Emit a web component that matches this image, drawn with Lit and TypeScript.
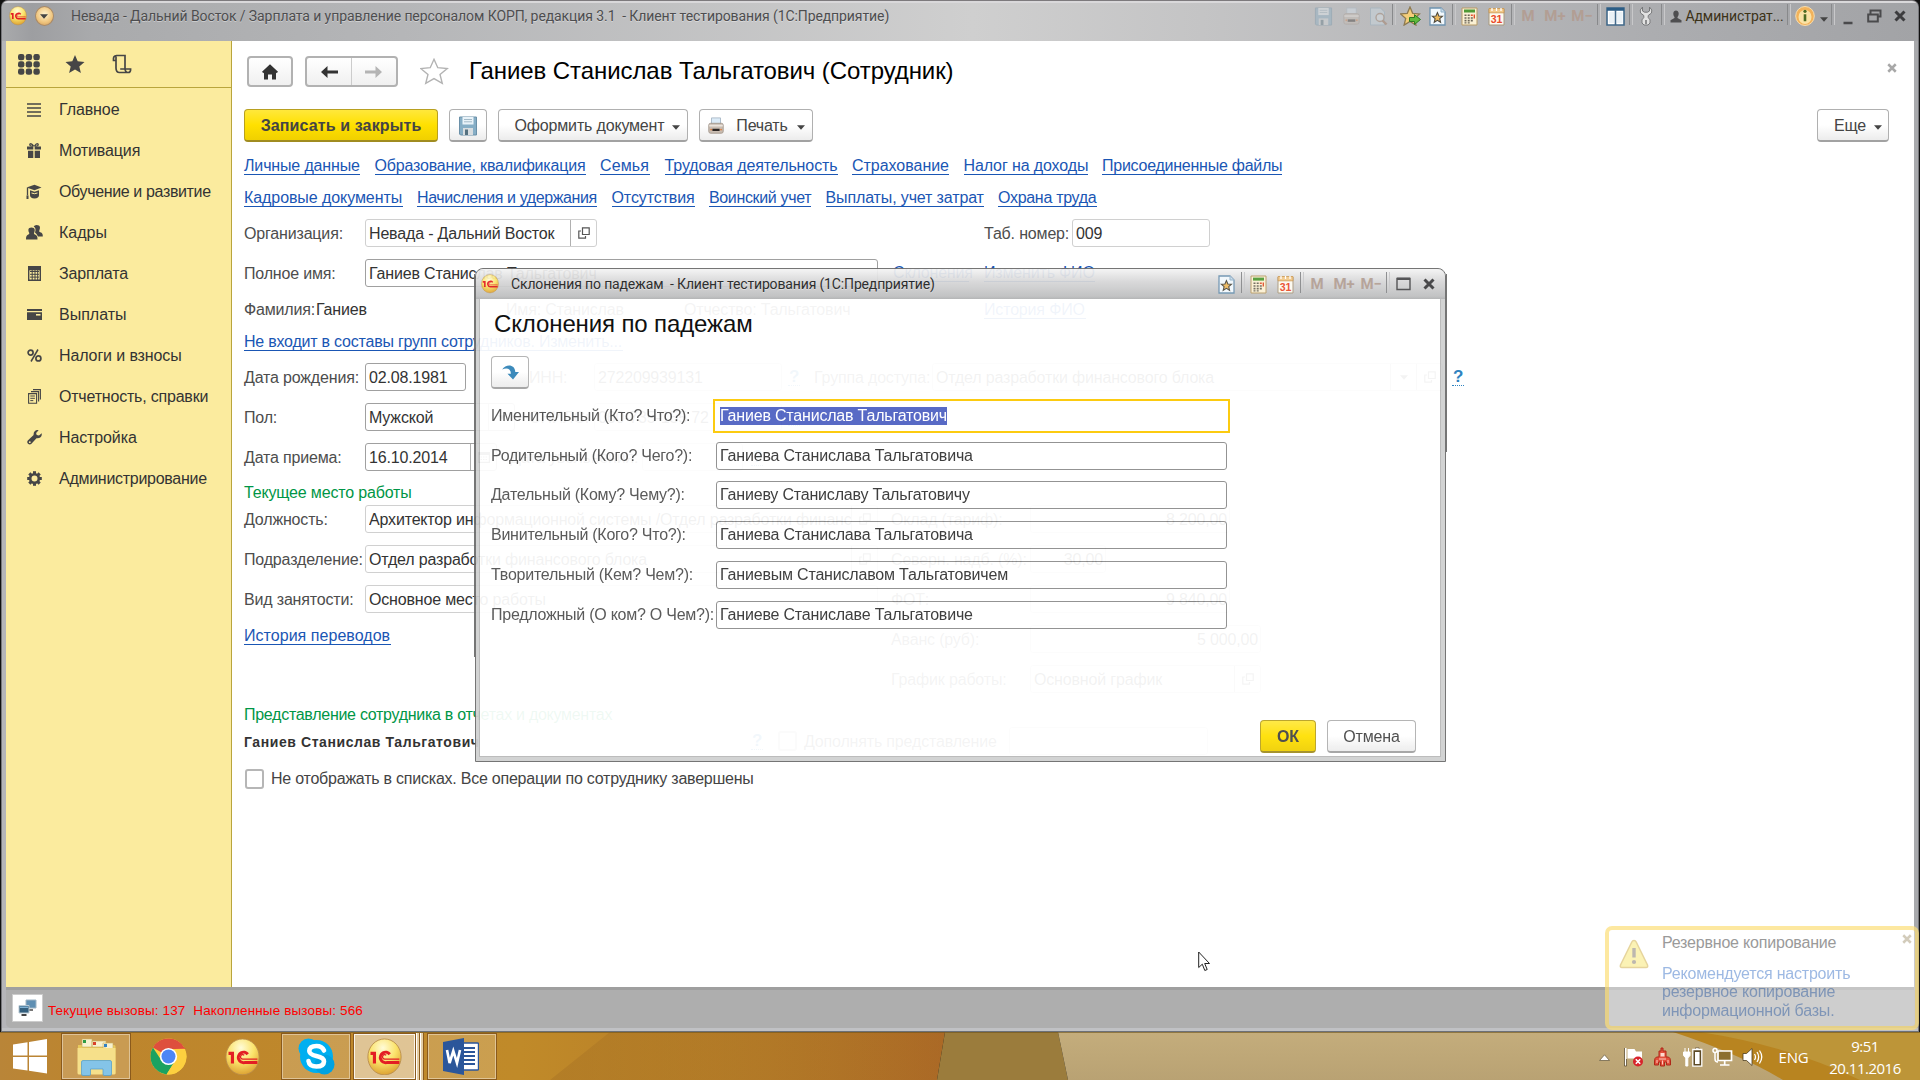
import { LitElement, html, svg, css, nothing, TemplateResult } from "lit";
import { customElement, state } from "lit/decorators.js";
import { classMap } from "lit/directives/class-map.js";
import { styleMap } from "lit/directives/style-map.js";

const icon = (w: number, h: number, body: unknown, box = `0 0 ${w} ${h}`) =>
  html`<svg class="ic" width=${w} height=${h} viewBox=${box}>${body}</svg>`;

const star = "M10 1l2.7 6.3 6.8.6-5.2 4.5 1.6 6.7L10 15.5l-5.9 3.6 1.6-6.7L.5 7.9l6.8-.6z";

const icons = {
  logo: (s: number) => icon(s, s * 1.08, svg`
    <defs><radialGradient id="lg" cx=".45" cy=".25" r=".8"><stop offset="0" stop-color="#fffbd8"/><stop offset=".5" stop-color="#fbe36a"/><stop offset="1" stop-color="#d99a2c"/></radialGradient></defs>
    <ellipse cx="20" cy="21.5" rx="19" ry="20.5" fill="url(#lg)" stroke="#b98d4a" stroke-width="1"/>
    <path d="M4 17.5h4.5V29" fill="none" stroke="#e31e24" stroke-width="3.6"/>
    <path d="M26 18.5a6 6 0 1 0-3.5 9.5H37" fill="none" stroke="#e31e24" stroke-width="3.4"/>
    <path d="M22 19.5a2.6 2.6 0 1 0-1 4.5H37" fill="none" stroke="#e31e24" stroke-width="1.5"/>`, "0 0 40 43"),
  floppy: (s: number) => icon(s, s, svg`<path d="M1.5 1h17v18h-16l-1-1z" fill="#86aec6" stroke="#6b90a8"/><path d="M4.5 1h11v7.500h-11z" fill="#e9f3f9"/><path d="M6 3.5h8M6 5.8h8" stroke="#a3bac8"/><path d="M5 12h10v7H5z" fill="#d8dde0"/><path d="M7 13.5h3V19H7z" fill="#54707f"/>`, "0 0 20 20"),
  printer: (s: number) => icon(s, s, svg`<path d="M5 1h10v8H5z" fill="#dcebf7" stroke="#a8b8c6"/><path d="M2 9q0-2 2-2h12q2 0 2 2v7q0 2-2 2H4q-2 0-2-2z" fill="#c9bdb2" stroke="#a3968b"/><path d="M2.5 9.5h15" stroke="#ece4dc" stroke-width="2"/><path d="M6 13h8v2.6H6z" fill="#2c2522"/><circle cx="4.6" cy="14" r="1" fill="#e07c3c"/><circle cx="15.6" cy="14" r="1" fill="#e07c3c"/>`, "0 0 20 20"),
  preview: icon(19, 19, svg`<path d="M1.5 1h10l4 4v13h-14z" fill="#cfe0ec" stroke="#8fb0c4"/><circle cx="11" cy="10.5" r="4" fill="#e4f1f8" stroke="#9c7c66" stroke-width="1.4"/><path d="M13.5 13.5l4 4" stroke="#9c6c4c" stroke-width="2.4"/>`),
  starPlus: icon(21, 20, svg`<path d=${star} fill="#f4ce7a" stroke="#8d7a52" stroke-width="1.3"/><path d="M9.5 11.5h5V8.7l6 4.8-6 5v-3h-5z" fill="#5fba3c" stroke="#2f7a22"/>`, "0 0 21 20"),
  starDoc: icon(17, 19, svg`<path d="M1 1h11l4 4v13H1z" fill="#f2f8fc" stroke="#6e93b0" stroke-width="1.3"/><path d="M12 1v4h4" fill="#c9dcea" stroke="#8fb0c8"/><path d=${star} transform="translate(3 5) scale(.54)" fill="#eeb95c" stroke="#4e4a40" stroke-width="2"/>`),
  calc: icon(17, 19, svg`<path d="M1 1h15v17H1z" fill="#fbf1d4" stroke="#b79a66"/><path d="M3 2.6h11v3H3z" fill="#4f9a35"/><g fill="#6c6658"><path d="M3.5 7.5h2v1.6h-2zM6.7 7.5h2v1.6h-2zM3.5 10.2h2v1.6h-2zM6.7 10.2h2v1.6h-2zM9.8 10.2h2v1.6h-2zM3.5 12.8h2v1.6h-2zM6.7 12.8h2v1.6h-2zM9.8 12.8h2v1.6h-2zM3.5 15.2h2v1.3h-2zM6.7 15.2h2v1.3h-2z"/></g><path d="M9.8 7.5h2v1.6h-2zM12.6 7.5h1.4v4h-1.4z" fill="#e0502c"/>`),
  calendar: icon(17, 19, svg`<path d="M1 2h15v16H1z" fill="#fdfaf0" stroke="#a9987c"/><path d="M1 1.5h15v4.3H1z" fill="#f2c98a" stroke="#c9954f" stroke-width=".8"/><path d="M4 1v3M8.5 1v3M13 1v3" stroke="#fff" stroke-width="1.3"/><text x="8.5" y="15.8" text-anchor="middle" font-size="10.5" font-weight="700" font-family="Liberation Sans" letter-spacing="0" fill="#ea4a2a">31</text>`),
  columns: icon(19, 19, svg`<path d="M1 1h17v17H1z" fill="#fff" stroke="#42698a" stroke-width="1.6"/><path d="M1 2.2h17" stroke="#2b5d86" stroke-width="3"/><path d="M9.5 3v15" stroke="#42698a" stroke-width="1.6"/><path d="M3 5h5v11H3zM11 5h5.5v11H11z" fill="#eaf1f6"/>`),
  wrench: icon(14, 20, svg`<path d="M3.500 1Q0 4 1.500 7L4.800 9.500V11.500Q2 13.500 3 17l2 2h4l2-2q1-3.500-1.800-5.500V9.500L12.500 7Q14 4 10.500 1V5L8.500 6.200h-3L3.500 5z" fill="#e2e2e2" stroke="#77787a"/><path d="M7 14v4" stroke="#77787a" stroke-width="1.600"/>`),
  user: icon(12, 13, svg`<path d="M3.300 3.500C3.300-.5 8.700-.5 8.700 3.500c0 2-.7 3-1.200 3.600v1l4 2.200v2.200H.5v-2.200l4-2.200v-1C4 6.500 3.300 5.500 3.300 3.500z" fill="#4e4e50"/>`),
  info: icon(20, 20, svg`<ellipse cx="10" cy="10" rx="9.300" ry="9.500" fill="#f2b25a" stroke="#f6dcae"/><ellipse cx="10" cy="11" rx="6.500" ry="7" fill="#fbe3a6"/><path d="M10 8.200v7" stroke="#4e6b24" stroke-width="2.600"/><circle cx="10" cy="5.300" r="1.600" fill="#4e6b24"/>`),
  min: icon(12, 12, svg`<path d="M1.500 9h9" stroke="#4a4a4c" stroke-width="2.600"/>`),
  restore: icon(15, 14, svg`<path d="M3.500 5V1.500h10v6H11" fill="none" stroke="#4a4a4c" stroke-width="2"/><path d="M1.200 5.500h9.600v7H1.200z" fill="none" stroke="#4a4a4c" stroke-width="2"/>`),
  max: icon(15, 14, svg`<path d="M1 1.500h13v11H1z" fill="none" stroke="#4a4a4c" stroke-width="1.400"/><path d="M1 1.800h13" stroke="#4a4a4c" stroke-width="2.400"/>`),
  close: (s: number, c: string) => icon(s, s, svg`<path d="M1.500 1.500l9 9M10.500 1.500l-9 9" stroke=${c} stroke-width="3"/>`, "0 0 12 12"),
  caret: icon(8, 5, svg`<path d="M0 .3h8L4 4.700z" fill="#444"/>`),
  home: icon(20, 18, svg`<path d="M10 1.200l8 7.500-1.400 1.500L16 9.600V16.500h-4v-5H8v5H4V9.600l-.6.6L2 8.700z" fill="#333"/>`),
  back: icon(20, 14, svg`<path d="M8.500 1L2 7l6.500 6v-4.600H19V5.600H8.500z" fill="#333"/>`),
  fwd: icon(20, 14, svg`<path d="M11.500 1L18 7l-6.500 6v-4.600H1V5.600h10.500z" fill="#b4b4b4"/>`),
  fav: icon(29, 28, svg`<path d=${star} transform="scale(1.400 1.330)" fill="#fff" stroke="#b3b3b3" stroke-width="1"/>`),
  open: icon(12, 12, svg`<path d="M4.500.8h6.700v6.700H4.500z" fill="none" stroke="#555" stroke-width="1.200"/><path d="M3 4H.8v7.200h6.700V9" fill="none" stroke="#555" stroke-width="1.200"/>`),
  date: icon(12, 11, svg`<path d="M.6.600h10.800v9.800H.6z" fill="none" stroke="#555" stroke-width="1.200"/><path d="M1 2h10" stroke="#555" stroke-width="2"/><path d="M2.500 5h7M2.500 7.500h7" stroke="#555" stroke-width="1.200" stroke-dasharray="1.500 1"/>`),
  turn: icon(19, 17, svg`<path d="M1.200 5.500C5-.5 14 0 14.300 8h3.700l-6 7.500L6.500 9.800h3.400C10 5 6 3 1.200 5.500z" fill="#2f83b7"/>`),
  nets: icon(19, 18, svg`<path d="M8 1h10v8H8z" fill="#5f8fb3" stroke="#9fb4c4"/><path d="M10 11h5" stroke="#555" stroke-width="1.600"/><path d="M1 6.500h10V14H1z" fill="#34607f" stroke="#b9c9d4"/><path d="M2 7.500h8V9H2z" fill="#7fb1d4"/><path d="M3.500 16h5" stroke="#444" stroke-width="2"/>`),
  warn: icon(30, 30, svg`<path d="M15 1.500q1.500 0 2.200 1.500L28.500 26q.8 2.500-1.500 2.500H3Q.7 28.500 1.500 26L12.800 3q.7-1.500 2.200-1.500z" fill="#f8e45c" stroke="#c9a227" stroke-width="1.500"/><path d="M15 9v9.500" stroke="#6e6250" stroke-width="3.400"/><circle cx="15" cy="23" r="2.100" fill="#6e6250"/>`),
};

const side: Record<string, TemplateResult> = {
  grid: icon(22, 21, svg`${[0, 1, 2].map((r) => [0, 1, 2].map((c) => svg`<rect x=${c * 7.700} y=${r * 7.300} width="6.400" height="6.200" rx="2.300" fill="#464646"/>`))}`),
  star: icon(21, 20, svg`<path d=${star} fill="#464646"/>`),
  scroll: icon(20, 20, svg`<path d="M4 6.500H1.500Q1 1.500 4.500 1.500H13v12.800q0 4.200 3 4.200 2.800 0 2.600-3.500H8.200M4 2.500V14q0 4.500 3.500 4.500h9" fill="none" stroke="#464646" stroke-width="1.700"/>`),
  list: icon(14, 14, svg`<path d="M0 1h14M0 5h14M0 9h14M0 13h14" stroke="#464646" stroke-width="1.700"/>`),
  gift: icon(14, 15, svg`<path d="M0 3.500h6.300v3H0zM7.700 3.500H14v3H7.700zM1 7.800h5.300V15H1zM7.700 7.800H13V15H7.700z" fill="#464646"/><path d="M6.500 3Q2 3.500 3 1q1.500-1 3.500 2M7.500 3Q12 3.500 11 1 9.500 0 7.500 3" fill="none" stroke="#464646" stroke-width="1.300"/>`),
  cap: icon(16, 16, svg`<path d="M.5 3.500L8.500.8l7 2.700-7 2.700z" fill="#464646"/><path d="M4 6.200l4.500 1.600L13 6.200v5q0 3-4.500 3.300Q4 14.200 4 11.200z" fill="#464646"/><path d="M1.500 4v7.500" stroke="#464646" stroke-width="1.300"/><path d="M.5 11.500h2V15h-2z" fill="#464646"/><path d="M5.500 9q3 1.400 6 0" stroke="#fbeb9e" fill="none"/>`),
  people: icon(17, 15, svg`<path d="M10.500 0c4 0 4 3 2.800 5.500-.3 1 .2 1.500 1 1.800 2 .7 2.500 1.700 2.500 4.200H12Q10.500 8.500 9 7.500 10.500 3 7.700 1.500 8.500 0 10.500 0z" fill="#464646"/><path d="M5.500 2.500c3.800 0 3.700 3 2.600 5.300-.3 1 .1 1.400.9 1.700 2 .7 2.500 2 2.500 5H0c0-3 .5-4.300 2.300-5 .8-.3 1.200-.7.900-1.700C2 5.500 1.800 2.500 5.500 2.500z" fill="#464646"/>`),
  calc: icon(13, 15, svg`<path d="M.7.700h11.600v13.600H.7z" fill="none" stroke="#464646" stroke-width="1.400"/><path d="M.7.700h11.600v3.600H.7z" fill="#464646"/><path d="M2 5.500h9M2 8.300h9M2 11.100h9M4.200 4v10M7 4v10M9.700 4v10" stroke="#464646"/>`),
  card: icon(15, 11, svg`<path d="M0 0h15v2H0z M0 3.200h15V11H0z" fill="#464646"/><path d="M9 5h4.500v1.600H9z" fill="#fbeb9e"/>`),
  percent: icon(15, 13, svg`<circle cx="3.600" cy="3.600" r="2.500" fill="none" stroke="#464646" stroke-width="1.700"/><circle cx="11.400" cy="9.400" r="2.500" fill="none" stroke="#464646" stroke-width="1.700"/><path d="M11 .5L4 12.500" stroke="#464646" stroke-width="1.500"/>`),
  docs: icon(13, 15, svg`<path d="M.6 4.600h8v9.700h-8z" fill="none" stroke="#464646" stroke-width="1.100"/><path d="M3 2.600h7.600v10M5 .6h7.400v10" fill="none" stroke="#464646" stroke-width="1.100"/><path d="M2.300 7h4.600M2.300 9.300h4.600M2.300 11.600h3" stroke="#464646"/>`),
  spanner: icon(15, 15, svg`<path d="M14.700 3.200l-2.700 2.300-2.300-.5-.6-2L11.600.3C9-.5 6.300 1.500 6.600 5L.8 10.600c-1.800 2 1.200 5.200 3.400 3.500L9.500 8.300c3.600.4 5.800-2 5.200-5.100z" fill="#464646"/><circle cx="2.800" cy="12.200" r=".9" fill="#fbeb9e"/>`),
  gear: icon(15, 15, svg`<circle cx="7.500" cy="7.500" r="4.300" fill="none" stroke="#464646" stroke-width="2.600"/>${[0, 45, 90, 135, 180, 225, 270, 315].map((a) => svg`<path d="M6 .2h3v2.800H6z" fill="#464646" transform=${`rotate(${a} 7.5 7.5)`}/>`)}`),
};

interface Tool { w: number; body?: unknown; dim?: boolean; sep?: boolean; mem?: string; }

const SEP = (w: number): Tool => ({ w, sep: true });

const MAIN_TOOLS: Tool[] = [
  { w: 28, body: icons.floppy(19), dim: true }, { w: 29, body: icons.printer(19), dim: true }, { w: 24, body: icons.preview, dim: true }, SEP(8),
  { w: 25, body: icons.starPlus }, { w: 28, body: icons.starDoc }, SEP(5),
  { w: 26, body: icons.calc }, { w: 28, body: icons.calendar }, SEP(5),
  { w: 26, mem: "M" }, { w: 28, mem: "M+" }, { w: 26, mem: "M−" }, SEP(7),
  { w: 26, body: icons.columns }, SEP(5), { w: 26, body: icons.wrench }, SEP(8),
  { w: 17, body: icons.user }, { w: 101, body: html`<span class="uname">Администрат...</span>` }, SEP(8),
  { w: 24, body: icons.info }, { w: 14, body: html`<span class="low">${icons.caret}</span>` }, SEP(4),
  { w: 26, body: html`<span class="low">${icons.min}</span>` }, { w: 26, body: icons.restore }, { w: 26, body: icons.close(12, "#3c3c3e") },
];

const DIALOG_TOOLS: Tool[] = [
  { w: 28, body: icons.starDoc }, SEP(5), { w: 26, body: icons.calc }, { w: 28, body: icons.calendar }, SEP(5),
  { w: 26, mem: "M" }, { w: 28, mem: "M+" }, { w: 26, mem: "M−" }, SEP(7),
  { w: 24, body: icons.max }, { w: 27, body: icons.close(12, "#3c3c3e") },
];

/* icon, caption, tracking */
const MENU: [string, string, number][] = [
  ["list", "Главное", -0.1], ["gift", "Мотивация", -0.12], ["cap", "Обучение и развитие", -0.36], ["people", "Кадры", 0], ["calc", "Зарплата", -0.12],
  ["card", "Выплаты", 0], ["percent", "Налоги и взносы", -0.12], ["docs", "Отчетность, справки", -0.2], ["spanner", "Настройка", -0.12], ["gear", "Администрирование", -0.28],
];

/* caption, width, tracking */
const LINKS: [string, number, number][][] = [
  [["Личные данные", 116, -0.15], ["Образование, квалификация", 211, -0.19], ["Семья", 50, 0.1], ["Трудовая деятельность", 173, -0.1], ["Страхование", 97, -0.03], ["Налог на доходы", 124, -0.12], ["Присоединенные файлы", 180, -0.25]],
  [["Кадровые документы", 158.5, -0.08], ["Начисления и удержания", 180, -0.4], ["Отсутствия", 83, -0.1], ["Воинский учет", 102, -0.35], ["Выплаты, учет затрат", 158, -0.13], ["Охрана труда", 99, -0.3]],
];

const CASES: [string, string][] = [
  ["Именительный (Кто? Что?):", "Ганиев Станислав Тальгатович"],
  ["Родительный (Кого? Чего?):", "Ганиева Станислава Тальгатовича"],
  ["Дательный (Кому? Чему?):", "Ганиеву Станиславу Тальгатовичу"],
  ["Винительный (Кого? Что?):", "Ганиева Станислава Тальгатовича"],
  ["Творительный (Кем? Чем?):", "Ганиевым Станиславом Тальгатовичем"],
  ["Предложный (О ком? О Чем?):", "Ганиеве Станиславе Тальгатовиче"],
];

@customElement("app-root")
export class AppRoot extends LitElement {
  @state() private activeCase = 0;

  static styles = css`
    :host { display: block; width: 1920px; height: 1080px; overflow: hidden; position: relative; background: #111; font: 16px/18px "Liberation Sans", Arial, sans-serif; color: #333; }
    * { box-sizing: border-box; }
    .ic { display: block; flex: none; }
    .screen { display: flex; flex-direction: column; height: 1080px; }
    .window { height: 1032px; margin-left: 1px; width: 1918px; display: flex; flex-direction: column; border-radius: 7px 7px 0 0; border: 1px solid #77777b; border-top: 1px solid #7d7a7d; border-bottom-color: #6c7078; background: linear-gradient(90deg, #b5b5b9, #c9c9c9 50%, #a8a9ac); overflow: hidden; }
    .titlebar { height: 40px; flex: none; display: flex; align-items: flex-start; padding: 0 5px 0 3px; border-top: 2px solid #d9d8da; background: linear-gradient(90deg, #a9aaac 0, #9d9ea1 30px, #a9aaac 90px, #b5b6b8 400px, #cfcfcf 970px, #c4c4c5 1200px, #acadb0 1650px, #a2a3a6); }
    .tb { height: 26px; display: flex; align-items: center; flex: none; }
    .tlogo { width: 25px; justify-content: center; }
    .tmenu { width: 28px; justify-content: center; }
    .orb { width: 19px; height: 20px; border-radius: 50%; background: radial-gradient(circle at 50% 40%, #fff3cf, #efc47c 60%, #c9935a); display: flex; align-items: center; justify-content: center; border: 1px solid #a98a68; }
    .cap { font: 14px/18px Roboto, "Liberation Sans", sans-serif; color: #4d4d4f; text-shadow: 0 1px 0 #ffffff60; white-space: pre; letter-spacing: -.09px; }
    .wcap { margin-left: 13px; flex: 1; }
    .tools { display: flex; align-items: center; flex: none; height: 26px; }
    .cell { display: flex; align-items: center; justify-content: center; height: 26px; flex: none; }
    .dim { opacity: .38; }
    .sep::before { content: ""; width: 2px; height: 21px; border-left: 1px solid #88898b; border-right: 1px solid #c8c8ca; margin-top: -4px; }
    .mem { font: 700 15px/18px Roboto, "Liberation Sans", sans-serif; color: #b29e94; }
    .uname { font: 14px/18px Roboto, "Liberation Sans", sans-serif; color: #3c3218; letter-spacing: -.1px; white-space: nowrap; }
    .low { margin-top: 7px; }
    .body { flex: 1; display: flex; margin: 0 4px 0 4px; min-height: 0; }
    .sidebar { width: 226px; background: #fbeb9e; border-right: 1px solid #b9a53c; flex: none; }
    .shead { height: 47px; border-bottom: 1px solid #b9a53c; display: flex; align-items: center; padding-left: 12px; }
    .shead .c1 { width: 46.500px; flex: none; }
    .shead .c2 { width: 47.500px; flex: none; }
    .item { display: flex; align-items: center; height: 41px; }
    .menu { padding-top: 1px; }
    .mi { width: 53px; display: flex; justify-content: center; padding-left: 3px; flex: none; }
    .main { flex: 1; background: #fff; padding: 15px 25px 0 12px; min-width: 0; letter-spacing: -.17px; }
    .row { display: flex; align-items: center; height: 28px; margin-top: 12px; white-space: nowrap; }
    .head { height: 31px; margin-top: 0; }
    .btn { display: flex; align-items: center; justify-content: center; height: 33px; border: 1px solid #b0b0b0; border-bottom: 2px solid #a2a2a2; border-radius: 4px; background: linear-gradient(#fff 50%, #ececec); color: #454545; flex: none; padding-top: 1px; }
    .hb { height: 31px; border: 2px solid #b2b2b2; background: linear-gradient(#fff, #f0f0f0); padding: 0; }
    .home { width: 46px; margin-left: 3px; }
    .nav { width: 93px; margin-left: 12px; }
    .nav span { flex: 1; height: 27px; display: flex; align-items: center; justify-content: center; }
    .nav span + span { border-left: 1px solid #ccc; }
    .fav { margin: 0 20px 0 22px; }
    .title { font-size: 24px; line-height: 30px; color: #000; flex: 1; padding-bottom: 2px; letter-spacing: -.08px; }
    .xclose { margin-right: -8px; margin-top: -8px; }
    .toolbar { height: 33px; margin-top: 22px; }
    .yellow { background: linear-gradient(#ffe83c, #ffe000 50%, #f0d000); border-color: #b8a020; border-bottom-color: #a08c20; font-weight: 700; color: #444; }
    .save { width: 194px; margin-right: 11px; letter-spacing: .12px; }
    .disk { width: 38px; margin-right: 11px; }
    .make { width: 190px; margin-right: 11px; }
    .print { width: 114px; padding-left: 0; }
    .make .t { margin: 0 8px 0 9px; } .print .t { margin: 0 9px 0 11px; } .more .t { margin: 0 8px 0 10px; }
    .more { width: 72px; margin-left: auto; }
    .btn .low2 { margin-top: 4px; }
    .links { height: 32px; margin-top: 0; gap: 14.500px; }
    .links.first { margin-top: 7px; height: 33px; }
    .a { color: #1a56b4; border-bottom: 1px solid #1a56b4; line-height: 17px; height: 18px; flex: none; }
    .in { height: 28px; border: 1px solid #d0d0d0; border-radius: 3px; background: #fff; display: flex; align-items: center; padding-left: 3px; color: #333; flex: none; overflow: hidden; }
    .in.dark { border-color: #a0a0a0; }
    .in .v { flex: 1; overflow: hidden; padding-top: 1px; }
    .in .b { width: 26px; height: 26px; border-left: 1px solid #b0b0b0; display: flex; align-items: center; justify-content: center; flex: none; }
    .right .v { text-align: right; padding-right: 2px; }
    .lab { color: #4d4d4d; flex: none; padding-top: 1px; }
    .val { width: 190px; flex: none; padding-top: 1px; }
    .q { color: #2f83c0; font: 700 17px/17px "Liberation Sans", sans-serif; border-bottom: 1px dotted #2f83c0; width: 12px; text-align: center; flex: none; }
    .green { color: #009646; }
    .org { margin-top: 5px; }
    .fam { margin-top: 0; height: 45px; }
    .grp { margin-top: 0; height: 19px; }
    .g1 { height: 16px; margin-top: 14px; }
    .g2 { height: 16px; margin-top: 13px; padding-top: 2px; letter-spacing: -.28px; }
    .cols { display: flex; margin-top: 4px; height: 188px; }
    .col { width: 647px; flex: none; }
    .col .row:first-child { margin-top: 0; }
    .hist { margin-top: 9px; letter-spacing: 0; }
    .bold { font-weight: 700; font-size: 14px; letter-spacing: .58px; color: #333; padding-top: 1px; }
    .rep { margin-top: 5px; }
    .chk { width: 19px; height: 20px; border: 2px solid #b6b6b6; border-radius: 3px; background: #fff; margin: 0 7px 0 1px; flex: none; }
    .hide { height: 20px; margin-top: 14px; color: #444; letter-spacing: -.23px; }
    .status { height: 41px; margin: 0 4px; background: #aeaeae; border-top: 3px solid #9f9f9f; border-radius: 0 0 5px 5px; display: flex; align-items: center; padding: 0 0 3px 6px; flex: none; }
    .sbtn { width: 31px; height: 28px; background: #fff; border: 1px solid #ccc; display: flex; align-items: center; justify-content: center; }
    .red { color: #f00; font: 13.500px/18px "Liberation Sans", sans-serif; letter-spacing: .13px; margin: 7px 0 0 5px; white-space: pre; }
    .bot { height: 3px; flex: none; background: #c0c1c4; }

    .dialog { position: absolute; left: 475px; top: 268px; width: 971px; height: 494px; opacity: .94; display: flex; flex-direction: column; border: 1px solid #6c6c6c; border-radius: 8px 8px 0 0; background: #cfd0d1; padding: 0 4px 4px 3px; letter-spacing: -.19px; }
    .dialog::before, .dialog::after { content: ""; position: absolute; top: 5px; width: 1px; background: #6c6c6c; }
    .dialog::before { left: -2px; height: 383px; }
    .dialog::after { right: -2px; height: 178px; }
    .dbar { height: 30px; display: flex; align-items: center; margin: 0 -4px 0 -3px; padding: 0 3px 0 1px; border-radius: 8px 8px 0 0; background: linear-gradient(#f4f4f4, #d8d8d9 40%, #bfc0c1 90%, #b0b1b2); flex: none; }
    .dbar .cap { color: #222; flex: 1; margin-left: 9px; letter-spacing: -.15px; }
    .dlogo { width: 25px; display: flex; justify-content: center; }
    .dbody { flex: 1; background: #fff; padding: 12px 24px 0 12px; display: flex; flex-direction: column; border: 1px solid #b8b8b8; border-top: 0; }
    .dtitle { font-size: 24px; line-height: 26px; color: #000; height: 26px; margin-left: 2px; letter-spacing: -.12px; }
    .dbtn { width: 38px; margin: 19px 0 7px -1px; padding: 0; }
    .case { display: flex; align-items: center; height: 39.800px; color: #505050; white-space: nowrap; margin-left: -1px; margin-right: -40px; }
    .case .n { width: 225px; flex: none; letter-spacing: -.25px; }
    .case .f { width: 511px; height: 28px; border: 1px solid #8c8c8c; border-radius: 3px; padding-left: 3px; display: flex; align-items: center; background: #fff; color: #333; }
    .case.on .f { width: 517px; height: 34px; border: 2px solid #fcc800; margin-left: -3px; padding-left: 5px; border-radius: 0; }
    .case.on .f span { background: #4d60c2; color: #fff; }
    .foot { display: flex; justify-content: flex-end; margin-top: auto; gap: 11px; padding-bottom: 3px; }
    .ok { width: 56px; }
    .cancel { width: 89px; }

    .toast { position: absolute; left: 1605px; top: 926px; width: 314px; height: 104px; border: 4px solid #fbd24280; border-radius: 7px; background: #ffffff66; display: flex; padding: 9px 3px 0 10px; letter-spacing: -.2px; }
    .toast .w { opacity: .45; padding-top: 0; }
    .tt { margin-left: 13px; flex: 1; margin-top: -4px; }
    .tt p { margin: -1px 0 13px; color: #9a9a9a; white-space: nowrap; }
    .tt div { color: #4c80cc8c; white-space: nowrap; line-height: 18.300px; mix-blend-mode: multiply; }
    .toast .x { opacity: .5; margin-top: -5px; }
    .cursor { position: absolute; left: 1198px; top: 951px; }

    .taskbar { height: 48px; flex: none; position: relative; display: flex; align-items: stretch; }
    .wall { position: absolute; left: 0; top: 0; z-index: 0; }
    .tk { position: relative; display: flex; align-items: center; justify-content: center; flex: none; margin-top: 1px; height: 47px; }
    .start { width: 61px; padding-right: 1px; }
    .app { width: 70px; }
    .chrome { width: 75px; }
    .onec { width: 73px; margin-right: 2px; }
    .cur { width: 63px; margin-left: 2px; }
    .word { margin-left: 3px; padding-right: 2px; }
    .on1 { background: #ffffff2e; border: 1px solid #8a5a1c; box-shadow: inset 0 0 0 1px #ffffff66; }
    .on2 { background: #ffffff80; border: 1px solid #8a5a1c; box-shadow: inset 0 0 0 1px #ffffffd0; }
    .stk { width: 4px; border-left: 1px solid #fff; border-right: 1px solid #8a5a1c; background: #e5cfa6; }
    .grow { flex: 1; }
    .tray { position: relative; display: flex; align-items: center; padding-top: 2px; color: #fff; font: 15px/18px "Open Sans", "Noto Sans", sans-serif; }
    .tr { display: flex; justify-content: center; flex: none; }
    .eng { width: 52px; text-align: center; font-size: 15px; letter-spacing: -.2px; padding-left: 1px; }
    .clock { width: 92px; text-align: center; line-height: 22px; font-size: 15px; letter-spacing: -.5px; margin-right: 9px; }
  `;

  private tools(list: Tool[]) {
    return html`<div class="tools">${list.map((t) => html`<span
      class=${classMap({ cell: true, sep: !!t.sep, dim: !!t.dim })} style=${styleMap({ width: `${t.w}px` })}>${t.mem ? html`<span class="mem">${t.mem}</span>` : t.body ?? nothing}</span>`)}</div>`;
  }

  private field(w: number, value: string, opts: { dark?: boolean; right?: boolean; buttons?: unknown[] } = {}) {
    return html`<span class=${classMap({ in: true, dark: !!opts.dark, right: !!opts.right })} style=${styleMap({ width: `${w}px` })}
      ><span class="v">${value}</span>${(opts.buttons ?? []).map((b) => html`<span class="b">${b}</span>`)}</span>`;
  }

  private gap(w: number) {
    return html`<span style=${styleMap({ width: `${w}px`, flex: "none" })}></span>`;
  }

  private label(text: string, w: number) {
    return html`<span class="lab" style=${styleMap({ width: `${w}px` })}>${text}</span>`;
  }

  private link(text: string, w: number, track = -0.17) {
    return html`<span class="a" style=${styleMap({ width: `${w}px`, letterSpacing: `${track}px` })}>${text}</span>`;
  }

  private form() {
    const o = icons.open;
    const c = icons.caret;
    return html`
      <div class="row org">${this.label("Организация:", 121)}${this.field(232, "Невада - Дальний Восток", { buttons: [o] })}${this.gap(387)}${this.label("Таб. номер:", 88)}${this.field(138, "009")}</div>
      <div class="row">${this.label("Полное имя:", 121)}${this.field(513, "Ганиев Станислав Тальгатович", { dark: true })}${this.gap(15)}${this.link("Склонения", 76)}${this.gap(15)}${this.link("Изменить ФИО", 111)}</div>
      <div class="row fam">${this.label("Фамилия:", 72)}<span class="val">Ганиев</span>${this.label("Имя: Станислав", 178)}${this.label("Отчество: Тальгатович", 300)}${this.link("История ФИО", 102)}</div>
      <div class="row grp">${this.link("Не входит в составы групп сотрудников. Изменить...", 379, -0.22)}</div>
      <div class="row">${this.label("Дата рождения:", 121)}${this.field(101, "02.08.1981", { dark: true })}${this.gap(63)}${this.label("ИНН:", 65)}${this.field(188, "272209939131")}${this.gap(6)}<span class="q">?</span>${this.gap(14)}${this.label("Группа доступа:", 118)}${this.field(511, "Отдел разработки финансового блока", { buttons: [c, o] })}${this.gap(9)}<span class="q">?</span></div>
      <div class="row">${this.label("Пол:", 121)}${this.field(150, "Мужской", { dark: true, buttons: [c] })}${this.gap(14)}${this.label("СНИЛС:", 65)}${this.field(188, "060-735-155 72")}${this.gap(6)}<span class="q">?</span></div>
      <div class="row">${this.label("Дата приема:", 121)}${this.field(132, "16.10.2014", { dark: true, buttons: [icons.date] })}${this.gap(13)}${this.label("Дата увольнения:", 132)}${this.field(101, "")}${this.gap(8)}<span class="q">?</span></div>
      <div class="row g1 green">Текущее место работы</div>
      <div class="cols">
        <div class="col">
          <div class="row">${this.label("Должность:", 121)}${this.field(513, "Архитектор информационной системы /Отдел разработки финансового", { buttons: [o] })}</div>
          <div class="row">${this.label("Подразделение:", 121)}${this.field(513, "Отдел разработки финансового блока", { buttons: [o] })}</div>
          <div class="row">${this.label("Вид занятости:", 121)}${this.field(513, "Основное место работы")}</div>
          <div class="row hist">${this.link("История переводов", 147, 0.04)}</div>
        </div>
        <div class="col">
          <div class="row">${this.label("Оклад (тариф):", 139)}${this.field(200, "8 200,00", { right: true })}</div>
          <div class="row">${this.label("Северн. надб. (%):", 139)}${this.field(76, "30,00", { right: true })}</div>
          <div class="row">${this.label("ФОТ:", 139)}${this.field(200, "9 840,00", { right: true })}</div>
          <div class="row">${this.label("Аванс (руб):", 139)}${this.field(231, "5 000,00", { right: true })}</div>
          <div class="row">${this.label("График работы:", 139)}${this.field(231, "Основной график", { buttons: [o] })}</div>
        </div>
      </div>
      <div class="row g2 green">Представление сотрудника в отчетах и документах</div>
      <div class="row rep"><span class="bold" style=${styleMap({ width: "507px" })}>Ганиев Станислав Тальгатович</span><span class="q">?</span>${this.gap(14)}<span class="chk"></span>${this.label("Дополнять представление", 205)}${this.field(199, "")}</div>
      <div class="row hide"><span class="chk"></span>Не отображать в списках. Все операции по сотруднику завершены</div>`;
  }

  private dialog() {
    return html`<section class="dialog">
      <div class="dbar"><span class="dlogo">${icons.logo(18)}</span><span class="cap">Склонения по падежам  - Клиент тестирования (1С:Предприятие)</span>${this.tools(DIALOG_TOOLS)}</div>
      <div class="dbody">
        <div class="dtitle">Склонения по падежам</div>
        <span class="btn dbtn">${icons.turn}</span>
        ${CASES.map(([n, v], i) => html`<div class=${classMap({ case: true, on: i === this.activeCase })} @click=${() => (this.activeCase = i)}><span class="n">${n}</span><span class="f"><span>${v}</span></span></div>`)}
        <div class="foot"><span class="btn yellow ok">ОК</span><span class="btn cancel">Отмена</span></div>
      </div>
    </section>`;
  }

  private taskbar() {
    return html`<footer class="taskbar">
      <svg class="wall" width="1920" height="48" viewBox="0 0 1920 48">
        <defs>
          <linearGradient id="w1"><stop offset="0" stop-color="#b98538"/><stop offset=".1" stop-color="#bd852d"/><stop offset=".55" stop-color="#c08a29"/><stop offset=".8" stop-color="#b67c28"/><stop offset="1" stop-color="#ab6826"/></linearGradient>
          <linearGradient id="w2" x2="0" y2="1"><stop offset="0" stop-color="#c4ad7c"/><stop offset="1" stop-color="#b9a273"/></linearGradient>
          <linearGradient id="w3"><stop offset="0" stop-color="#a87324" stop-opacity=".5"/><stop offset="1" stop-color="#a87324" stop-opacity=".1"/></linearGradient>
        </defs>
        <path d="M0 0h945l-8 48H0z" fill="url(#w1)"/>
        <path d="M610 0h335l-8 48H550z" fill="url(#w3)"/>
        <path d="M945 0h113l10 48H937z" fill="#9b7c3c"/>
        <path d="M1058 0h862v48H1068z" fill="url(#w2)"/>
        <path d="M1673 0h247v48h-137Q1740 22 1673 0z" fill="#b88420"/>
        <path d="M1700 0h220v48h-60Q1790 14 1700 0z" fill="#bd9538"/>
        <path d="M0 .5h1920" stroke="#6c531c" stroke-opacity=".6"/>
      </svg>
      <span class="tk start">${icon(34, 35, svg`<path d="M0 5.500l14.500-2.200v13.200H0zM16 3l18-3v16.500H16zM0 18h14.500v13.500L0 29.500zM16 18h18v16.500l-18-2.800z" fill="#fff"/>`)}</span>
      <span class="tk on1 app">${icon(39, 38, svg`<path d="M1 7h8l2-3h9l2 3h15q1.500 0 1.500 1.500V36H1z" fill="#e8c95c"/><path d="M5 1h10v8H5zM15 3h14v6H15zM26 5h10v6H26z" fill="#f7f1cf" stroke="#c9b060" stroke-width=".6"/><path d="M6 2h3v3H6z" fill="#2f9c46"/><path d="M16 4h3v3h-3z" fill="#d9412b"/><path d="M27 6h3v3h-3z" fill="#2f82c4"/><path d="M.5 10h38v25q0 1.500-1.500 1.500H2Q.5 36.500.5 35z" fill="#f6e08a"/><path d="M4.500 24q0-1.500 1.500-1.500h27q1.500 0 1.500 1.500v12q0 1.500-1.500 1.500h-6q-1 0-1-1.500v-5H13.500v5q0 1.500-1 1.500H6q-1.500 0-1.500-1.500z" fill="#84c4e8" stroke="#4d9ccc" stroke-width=".7"/>`)}</span>
      <span class="tk chrome">${icon(37, 37, svg`<circle cx="18.500" cy="18.500" r="18" fill="#fdd03f"/><path d="M18.500 18.500L2.900 9.500A18 18 0 0 1 34.100 9.500L36 11H18.500z" fill="#de4f3d"/><path d="M2.900 9.500A18 18 0 0 0 16.500 36.400L25.500 22l-14 .5z" fill="#1ba261"/><path d="M34.500 10.700A18 18 0 0 1 16.500 36.400L25.500 22.500 25 11z" fill="#fdd03f"/><circle cx="18.500" cy="18.500" r="8.600" fill="#fff"/><circle cx="18.500" cy="18.500" r="7" fill="#4c86f5"/>`)}</span>
      <span class="tk onec">${icons.logo(35)}</span>
      <span class="tk on1 app">${icon(37, 37, svg`<circle cx="18.500" cy="18.500" r="16.500" fill="#00aff0"/><circle cx="10.500" cy="10.500" r="10" fill="#00aff0"/><circle cx="26.500" cy="26.500" r="10" fill="#00a2e2"/><path d="M26 12.500Q24 8 18.500 8q-7 0-7.200 5 .1 3.500 7 5 7.700 1.500 7.700 5.500-.3 5-7.500 5T10.500 23" fill="none" stroke="#fff" stroke-width="4.600" stroke-linecap="round"/>`)}</span>
      <span class="tk on2 cur">${icons.logo(35)}</span>
      <span class="tk stk"></span><span class="tk stk"></span>
      <span class="tk on1 app word">${icon(36, 37, svg`<path d="M18 5h16.500q1 0 1 1v25q0 1-1 1H18z" fill="#fff" stroke="#2b569a" stroke-width="1.400"/><path d="M21 10h11M21 14h11M21 18h11M21 22h11M21 26h11" stroke="#2b569a" stroke-width="2"/><path d="M0 4L21 0v37L0 33z" fill="#2b569a"/><path d="M4 12l2.600 13L10.300 13l3.700 12L17 12" fill="none" stroke="#fff" stroke-width="2.600"/>`)}</span>
      <span class="grow"></span>
      <div class="tray">
        <span class="tr" style=${styleMap({ width: "30px" })}>${icon(11, 7, svg`<path d="M.5 6.500L5.500.8l5 5.700z" fill="#fff" stroke="#6f6246" stroke-width=".8"/>`)}</span>
        <span class="tr" style=${styleMap({ width: "29px" })}>${icon(20, 20, svg`<path d="M1.500 1v18" stroke="#fff" stroke-width="2"/><path d="M3.500 2h7l1.500 2.500h6v9h-7l-1-2h-6.500z" fill="#fff"/><path d="M.5 1v18h2v-7" fill="none" stroke="#4d3d20" stroke-width=".7"/><circle cx="14" cy="14.500" r="5" fill="#d8232b"/><path d="M11.800 12.300l4.400 4.400M16.200 12.300l-4.400 4.400" stroke="#fff" stroke-width="1.600"/>`)}</span>
        <span class="tr" style=${styleMap({ width: "29px" })}>${icon(17, 20, svg`<path d="M5 4h2V1h2v3h3v6h2.500q2 1 2 4v4h-4v-3h-2v4h-4v-4h-2v3h-4v-4q0-3 2-4H5z" fill="#e2503c" stroke="#b02718"/><path d="M6.500 6h4v3.500h-4z" fill="#ffd9cf"/><path d="M5 12h7M3 13v3M8.500 13.500v4M14 13v3" stroke="#ffc9bd"/>`)}</span>
        <span class="tr" style=${styleMap({ width: "31px" })}>${icon(20, 20, svg`<path d="M2 1v4M5.500 1v4M.5 5h6.500v3.500L4.800 11v8H2.800v-8L.5 8.500z" fill="#fff" stroke="#fff" stroke-width="1"/><path d="M12.500 .8h3.500v2h-3.500z" fill="#fff" stroke="#4d3d20" stroke-width=".6"/><path d="M9.800 2.500h9v16.700h-9z" fill="#5d4a26" stroke="#fff" stroke-width="1.300"/><path d="M12 5h4.600v12H12z" fill="#fff"/>`)}</span>
        <span class="tr" style=${styleMap({ width: "29px" })}>${icon(21, 20, svg`<path d="M6 4h13.500v9.500H6z" fill="#8c6f30" stroke="#fff" stroke-width="1.700"/><path d="M12.700 14v4M8 18h9.500" stroke="#fff" stroke-width="1.700"/><circle cx="3" cy="3.500" r="2" fill="none" stroke="#fff" stroke-width="1.500"/><path d="M3 5.500V12q0 3 3 3" fill="none" stroke="#fff" stroke-width="1.500"/>`)}</span>
        <span class="tr" style=${styleMap({ width: "30px" })}>${icon(21, 20, svg`<path d="M1 6.500h3.500L10 1.500v17l-5.500-5H1z" fill="#fff" stroke="#4d3d20" stroke-width=".8"/><path d="M12.500 7q2 3 0 6M15 5q3.300 5 0 10M17.500 3.500q4.500 6.500 0 13" fill="none" stroke="#fff" stroke-width="1.300"/>`)}</span>
        <span class="eng">ENG</span>
        <span class="clock">9:51<br>20.11.2016</span>
      </div>
    </footer>`;
  }

  render() {
    return html`<div class="screen">
      <div class="window">
        <header class="titlebar">
          <span class="tb tlogo">${icons.logo(18)}</span><span class="tb tmenu"><span class="orb">${icons.caret}</span></span>
          <span class="tb cap wcap">Невада - Дальний Восток / Зарплата и управление персоналом КОРП, редакция 3.1  - Клиент тестирования (1С:Предприятие)</span>
          ${this.tools(MAIN_TOOLS)}
        </header>
        <div class="body">
          <nav class="sidebar">
            <div class="shead"><span class="c1">${side.grid}</span><span class="c2">${side.star}</span>${side.scroll}</div>
            <div class="menu">${MENU.map(([k, t, ls]) => html`<div class="item"><span class="mi">${side[k]}</span><span style=${styleMap({ letterSpacing: `${ls}px` })}>${t}</span></div>`)}</div>
          </nav>
          <main class="main">
            <div class="row head">
              <span class="btn hb home">${icons.home}</span><span class="btn hb nav"><span>${icons.back}</span><span>${icons.fwd}</span></span>
              <span class="fav">${icons.fav}</span><span class="title">Ганиев Станислав Тальгатович (Сотрудник)</span><span class="xclose">${icons.close(10, "#a8a8a8")}</span>
            </div>
            <div class="row toolbar">
              <span class="btn yellow save">Записать и закрыть</span><span class="btn disk">${icons.floppy(20)}</span>
              <span class="btn make"><span class="t">Оформить документ</span><span class="low2">${icons.caret}</span></span>
              <span class="btn print">${icons.printer(18)}<span class="t">Печать</span><span class="low2">${icons.caret}</span></span>
              <span class="btn more"><span class="t">Еще</span><span class="low2">${icons.caret}</span></span>
            </div>
            ${LINKS.map((row, i) => html`<div class=${classMap({ row: true, links: true, first: i === 0 })}>${row.map(([t, w, ls]) => this.link(t, w, ls))}</div>`)}
            ${this.form()}
          </main>
        </div>
        <div class="status"><span class="sbtn">${icons.nets}</span><span class="red">Текущие вызовы: 137  Накопленные вызовы: 566</span></div>
        <div class="bot"></div>
      </div>
      ${this.taskbar()}
    </div>
    ${this.dialog()}
    <aside class="toast"><span class="w">${icons.warn}</span><div class="tt"><p>Резервное копирование</p><div>Рекомендуется настроить<br>резервное копирование<br>информационной базы.</div></div><span class="x">${icons.close(10, "#a89a7a")}</span></aside>
    <svg class="cursor" width="13" height="21" viewBox="0 0 13 21"><path d="M.7 1v15.500l3.600-3.300 2.500 6.300 2.400-1-2.500-6h4.800z" fill="#fff" stroke="#222" stroke-width="1"/></svg>`;
  }
}
